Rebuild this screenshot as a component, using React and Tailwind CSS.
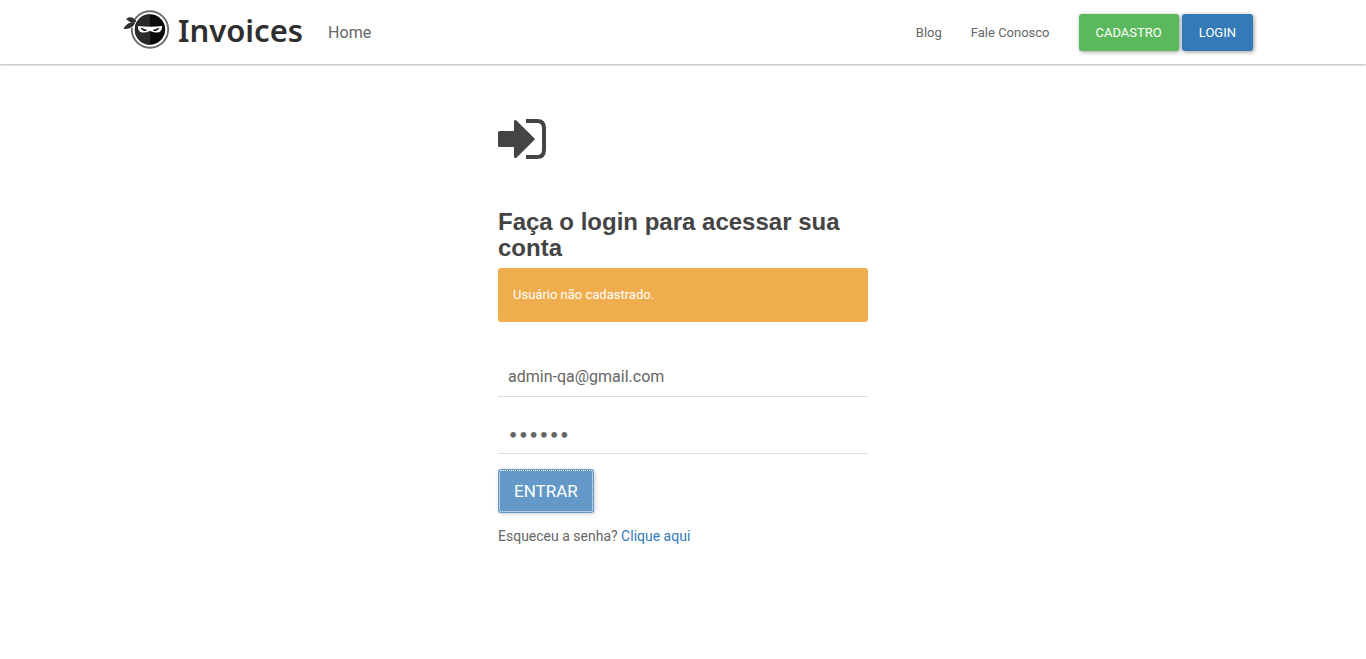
import React from "react";

function NinjaMark() {
  return (
    <svg viewBox="0 0 48 40" className="h-10 w-12 shrink-0" aria-hidden="true">
      <circle cx="27" cy="19.5" r="18.2" fill="#fff" stroke="#6b6b6b" strokeWidth="1.9" />
      <circle cx="27" cy="19.5" r="15.2" fill="#0b0b0b" />
      <path d="M27 4.300A15.200 15.200 0 0 0 27 34.700z" fill="#2a2a2a" />
      <path d="M7 12.500L11 9.500V17L8 18z" fill="#fff" />
      <path d="M3 9C7 5.800 11 7.500 13.500 11.800C10 13.400 6.500 12.600 3 9z" fill="#303030" />
      <path d="M.500 18.800C3 14 7.500 11.300 12.300 12.600C11 17 6 19.700.500 18.800z" fill="#303030" />
      <path d="M15 16Q27 17.500 39 16Q39.500 20.600 36 22.200Q31.500 23 28.600 21.400Q27 20.600 25.400 21.400Q22.500 23 18 22.200Q14.500 20.600 15 16z" fill="#fff" />
      <path d="M17.500 17.500l7 2.800q-4.800 2-7-2.800zM36.500 17.500l-7 2.800q4.800 2 7-2.800z" fill="#111" />
    </svg>
  );
}

function SignInIcon() {
  return (
    <svg viewBox="0 0 48 40" className="h-10 w-12" fill="#444" aria-hidden="true">
      <path d="M1.500 12H16V2.500Q16 1 17.200 1Q18 1 18.700 1.700L36.300 19.200Q37.300 20 36.300 20.900L18.700 38.400Q18 39 17.200 39Q16 39 16 37.500V28H1.500Q0 28 0 26.500V13.500Q0 12 1.500 12z" />
      <path d="M28 0H39Q48 0 48 9V31Q48 40 39 40H28V36H39Q44 36 44 31V9Q44 4 39 4H28z" />
    </svg>
  );
}

export default function App() {
  return (
    <div className="bg-white font-['Roboto',sans-serif] text-[13px] text-[#666]">
      <header className="shadow-[0_1px_2px_rgba(0,0,0,0.3)]">
        <nav className="mx-auto flex h-16 max-w-[1170px] items-center px-[15px] leading-[21px]">
          <a href="#" className="ml-[10px] flex items-center gap-[7px] pb-1 font-['Noto_Sans',sans-serif] text-[31px] leading-10 font-semibold text-[#2f2f2f]">
            <NinjaMark />
            <span>Invoices</span>
          </a>
          <a href="#" className="ml-[25px] text-base leading-[25px]">Home</a>
          <div className="ml-auto flex items-center gap-[29px]">
            <a href="#">Blog</a>
            <a href="#">Fale Conosco</a>
            <div className="flex gap-[3px] text-white">
              <a href="#" className="rounded-[3px] bg-[#5cb85c] px-[17px] py-2 shadow-[1px_1px_4px_rgba(0,0,0,0.4)]">CADASTRO</a>
              <a href="#" className="rounded-[3px] bg-[#337ab7] px-[17px] py-2 shadow-[1px_1px_4px_rgba(0,0,0,0.4)]">LOGIN</a>
            </div>
          </div>
        </nav>
      </header>

      <main className="mx-auto max-w-[370px] pt-[55px]">
        <SignInIcon />
        <h1 className="mt-[50px] font-['Liberation_Sans',sans-serif] text-2xl leading-[26px] font-bold text-[#444]">
          Faça o login para acessar sua conta
        </h1>
        <div role="alert" className="mt-[7px] rounded-[3px] bg-[#f0ad4e] p-[15px] leading-6 text-white">
          Usuário não cadastrado.
        </div>
        <form className="mt-[34px]" onSubmit={(e) => e.preventDefault()}>
          <input
            type="email"
            aria-label="E-mail"
            defaultValue="admin-qa@gmail.com"
            className="block h-[41px] w-full border-b border-[#ddd] px-[10px] text-base outline-none"
          />
          <input
            type="password"
            aria-label="Senha"
            defaultValue="123456"
            className="mt-4 block h-[41px] w-full border-b border-[#ddd] px-[10px] pt-1 font-['DejaVu_Sans',sans-serif] text-base font-bold outline-none"
          />
          <button
            type="submit"
            className="mt-[15px] block h-11 rounded-[3px] bg-[#6398c8] px-4 pt-0.5 text-[17px] text-white shadow-[1px_1px_4px_rgba(0,0,0,0.2)] outline-1 -outline-offset-2 outline-dotted outline-white"
          >
            ENTRAR
          </button>
        </form>
        <p className="mt-[11px] text-sm leading-6">
          Esqueceu a senha? <a href="#" className="text-[#337ab7]">Clique aqui</a>
        </p>
      </main>
    </div>
  );
}
